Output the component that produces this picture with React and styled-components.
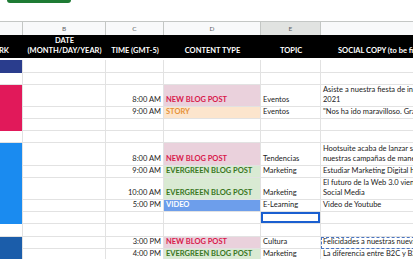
import React from 'react';
import styled, { createGlobalStyle } from 'styled-components';

const GlobalStyle = createGlobalStyle`
  html, body {
    margin: 0;
    padding: 0;
    background: #fff;
    overflow: hidden;
  }
  body {
    font-family: Lato, "Open Sans", sans-serif;
  }
`;

const Page = styled.div`
  width: 413px;
  height: 259px;
  overflow: hidden;
`;

const TopBar = styled.div`
  height: 21px;
  padding-left: 7px;
`;

const ShareButton = styled.div`
  width: 64px;
  height: 3px;
  background: #1e7b34;
  border-radius: 0 0 3px 3px;
`;

const Sheet = styled.div`
  display: grid;
  grid-template-columns: 23px 83px 58px 97px 60px 230px;
  grid-template-rows: ${({ $rows }) => $rows};
  width: 551px;
`;

const Letter = styled.div`
  box-sizing: border-box;
  display: flex;
  align-items: center;
  justify-content: center;
  border-top: 1px solid #c4c7c5;
  border-right: 1px solid #c4c7c5;
  background: ${({ $active }) => ($active ? '#e1e3e1' : '#f8f9fa')};
  color: #5f6368;
  font-size: 6.5px;
`;

const HeadCell = styled.div`
  box-sizing: border-box;
  display: flex;
  flex-direction: column;
  align-items: ${({ $align }) => $align || 'center'};
  justify-content: flex-end;
  padding: 0 0 2px ${({ $indent }) => $indent || 0}px;
  background: #000;
  border-bottom: 2px solid #fff;
  color: #fff;
  font-weight: 700;
  font-size: 7.5px;
  line-height: 10px;
  white-space: nowrap;
  overflow: hidden;
`;

const ClippedHead = styled(HeadCell)`
  align-items: flex-end;
  padding-right: 14px;
`;

const Block = styled.div`
  grid-row: span ${({ $span }) => $span};
  background: ${({ $color }) => $color};
  border-right: 1px solid #e2e2e2;
`;

const Cell = styled.div`
  box-sizing: border-box;
  display: flex;
  flex-direction: column;
  justify-content: flex-end;
  align-items: ${({ $align }) => $align || 'flex-start'};
  padding: 0 2px 1px 2px;
  border-right: 1px solid #e2e2e2;
  border-bottom: 1px solid #e2e2e2;
  background: ${({ $bg }) => $bg || '#fff'};
  color: ${({ $fg }) => $fg || '#222'};
  font-size: 7.5px;
  font-weight: ${({ $bold }) => ($bold ? 700 : 400)};
  line-height: 10px;
  white-space: nowrap;
  overflow: hidden;
`;

const SelectedCell = styled(Cell)`
  box-shadow: inset 0 0 0 2px #1a5fd0;
`;

const CopiedCell = styled(Cell)`
  outline: 1.5px dashed #4a74c0;
  outline-offset: -1.5px;
`;

const types = {
  post: { label: 'NEW BLOG POST', bg: '#ead1dc', fg: '#d8184b' },
  story: { label: 'STORY', bg: '#fce5cd', fg: '#e69138' },
  evergreen: { label: 'EVERGREEN BLOG POST', bg: '#d9ead3', fg: '#38761d' },
  video: { label: 'VIDEO', bg: '#6d9eeb', fg: '#ffffff' },
};

const blocks = {
  0: { span: 1, color: '#2a3d8d' },
  2: { span: 3, color: '#e1195a' },
  6: { span: 5, color: '#1a8bf0' },
  12: { span: 2, color: '#1b5daa' },
};
const covered = [3, 4, 7, 8, 9, 10, 13];

const rows = [
  { h: 13 },
  { h: 12 },
  { h: 22, time: '8:00 AM', type: 'post', topic: 'Eventos', copy: ['Asiste a nuestra fiesta de inauguración del año', '2021'] },
  { h: 12, time: '9:00 AM', type: 'story', topic: 'Eventos', copy: ['"Nos ha ido maravilloso. Gracias a todos'] },
  { h: 12 },
  { h: 12 },
  { h: 23, time: '8:00 AM', type: 'post', topic: 'Tendencias', copy: ['Hootsuite acaba de lanzar su nuevo informe', 'nuestras campañas de manejo de redes'] },
  { h: 12, time: '9:00 AM', type: 'evergreen', topic: 'Marketing', copy: ['Estudiar Marketing Digital hoy es clave'] },
  { h: 22, time: '10:00 AM', type: 'evergreen', topic: 'Marketing', copy: ['El futuro de la Web 3.0 viene de la mano', 'Social Media'] },
  { h: 12, time: '5:00 PM', type: 'video', topic: 'E-Learning', copy: ['Video de Youtube'] },
  { h: 12, selected: true },
  { h: 13 },
  { h: 12, time: '3:00 PM', type: 'post', topic: 'Cultura', copy: ['Felicidades a nuestras nuevas incorporaciones'], copied: true },
  { h: 12, time: '4:00 PM', type: 'evergreen', topic: 'Marketing', copy: ['La diferencia entre B2C y B2B'] },
];

const template = ['14px', '25px', ...rows.map((r) => `${r.h}px`)].join(' ');

const App = () => (
  <Page>
    <GlobalStyle />
    <TopBar>
      <ShareButton />
    </TopBar>
    <Sheet $rows={template}>
      <Letter />
      <Letter>B</Letter>
      <Letter>C</Letter>
      <Letter>D</Letter>
      <Letter $active>E</Letter>
      <Letter>F</Letter>

      <ClippedHead>SOCIAL NETWORK</ClippedHead>
      <HeadCell>
        <span>DATE</span>
        <span>(MONTH/DAY/YEAR)</span>
      </HeadCell>
      <HeadCell>TIME (GMT-5)</HeadCell>
      <HeadCell>CONTENT TYPE</HeadCell>
      <HeadCell>TOPIC</HeadCell>
      <HeadCell $align="flex-start" $indent={17}>
        SOCIAL COPY (to be filled in by the team)
      </HeadCell>

      {rows.map((row, i) => {
        const type = row.type ? types[row.type] : null;
        const CopyCell = row.copied ? CopiedCell : Cell;
        const TopicCell = row.selected ? SelectedCell : Cell;
        return (
          <React.Fragment key={i}>
            {blocks[i] ? (
              <Block $span={blocks[i].span} $color={blocks[i].color} />
            ) : covered.includes(i) ? null : (
              <Cell />
            )}
            <Cell />
            <Cell $align="flex-end">{row.time}</Cell>
            <Cell $bg={type?.bg} $fg={type?.fg} $bold>
              {type?.label}
            </Cell>
            <TopicCell>{row.topic}</TopicCell>
            <CopyCell>
              {(row.copy || []).map((line) => (
                <span key={line}>{line}</span>
              ))}
            </CopyCell>
          </React.Fragment>
        );
      })}
    </Sheet>
  </Page>
);

export default App;
